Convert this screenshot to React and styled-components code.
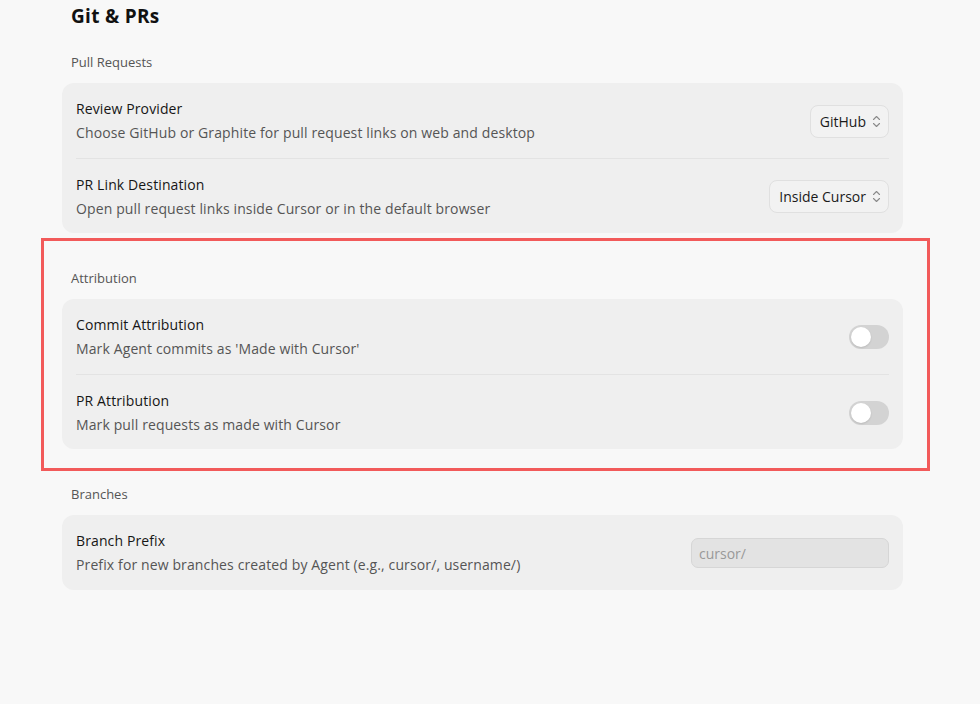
import React, { useState } from "react";
import styled, { createGlobalStyle } from "styled-components";

const GlobalStyle = createGlobalStyle`
  html, body {
    margin: 0;
    padding: 0;
    background: #f8f8f8;
  }

  body {
    font-family: "Open Sans", "Noto Sans", sans-serif;
    color: #1a1a1a;
    -webkit-font-smoothing: antialiased;
  }
`;

const SECTIONS = [
  {
    label: "Pull Requests",
    rows: [
      {
        title: "Review Provider",
        desc: "Choose GitHub or Graphite for pull request links on web and desktop",
        control: { kind: "select", value: "GitHub" },
      },
      {
        title: "PR Link Destination",
        desc: "Open pull request links inside Cursor or in the default browser",
        control: { kind: "select", value: "Inside Cursor" },
      },
    ],
  },
  {
    label: "Attribution",
    highlighted: true,
    rows: [
      {
        title: "Commit Attribution",
        desc: "Mark Agent commits as 'Made with Cursor'",
        control: { kind: "toggle", name: "commit" },
      },
      {
        title: "PR Attribution",
        desc: "Mark pull requests as made with Cursor",
        control: { kind: "toggle", name: "pr" },
      },
    ],
  },
  {
    label: "Branches",
    rows: [
      {
        title: "Branch Prefix",
        desc: "Prefix for new branches created by Agent (e.g., cursor/, username/)",
        control: { kind: "input", placeholder: "cursor/" },
      },
    ],
  },
];

const Chevrons = () => (
  <svg width="9" height="13" viewBox="0 0 9 13" fill="none">
    <path d="M1.5 4.5L4.5 1.5L7.5 4.5" stroke="#8a8a8a" strokeWidth="1.1" strokeLinecap="round" strokeLinejoin="round" />
    <path d="M1.5 8.5L4.5 11.5L7.5 8.5" stroke="#8a8a8a" strokeWidth="1.1" strokeLinecap="round" strokeLinejoin="round" />
  </svg>
);

const Control = ({ control, toggles, onToggle }) => {
  if (control.kind === "select") {
    return (
      <Select>
        <span>{control.value}</span>
        <Chevrons />
      </Select>
    );
  }
  if (control.kind === "toggle") {
    const on = !!toggles[control.name];
    return (
      <Toggle $on={on} onClick={() => onToggle(control.name)}>
        <Knob $on={on} />
      </Toggle>
    );
  }
  return <TextInput placeholder={control.placeholder} />;
};

const App = () => {
  const [toggles, setToggles] = useState({ commit: false, pr: false });

  const handleToggle = (name) => {
    setToggles((prev) => ({ ...prev, [name]: !prev[name] }));
  };

  return (
    <>
      <GlobalStyle />
      <Page>
        <Heading>Git &amp; PRs</Heading>
        {SECTIONS.map((section) => (
          <Section key={section.label} $highlighted={section.highlighted}>
            <SectionLabel>{section.label}</SectionLabel>
            <Card>
              {section.rows.map((row) => (
                <Row key={row.title}>
                  <RowText>
                    <RowTitle>{row.title}</RowTitle>
                    <RowDesc>{row.desc}</RowDesc>
                  </RowText>
                  <Control control={row.control} toggles={toggles} onToggle={handleToggle} />
                </Row>
              ))}
            </Card>
          </Section>
        ))}
      </Page>
    </>
  );
};

const Page = styled.div`
  width: 841px;
  margin-left: 62px;
  padding-top: 4px;
  display: flex;
  flex-direction: column;
  gap: 37px;
`;

const Heading = styled.h1`
  margin: 0 0 -11px 9px;
  font-size: 19px;
  font-weight: 700;
  line-height: 24px;
  letter-spacing: 0.3px;
  color: #111;
`;

const Section = styled.section`
  position: relative;
  display: flex;
  flex-direction: column;
  gap: 13px;

  ${({ $highlighted }) =>
    $highlighted &&
    `
    &::after {
      content: "";
      position: absolute;
      left: -21px;
      right: -27px;
      top: -32px;
      bottom: -22px;
      border: 3px solid #f25a5a;
      pointer-events: none;
    }
  `}
`;

const SectionLabel = styled.div`
  padding-left: 9px;
  font-size: 13px;
  line-height: 16px;
  color: #555;
`;

const Card = styled.div`
  background: #efefef;
  border-radius: 12px;
  padding: 0 14px;
`;

const Row = styled.div`
  display: flex;
  align-items: center;
  justify-content: space-between;
  height: 75px;
  box-sizing: border-box;
  padding-top: 1px;

  & + & {
    border-top: 1px solid #e3e3e3;
  }
`;

const RowText = styled.div`
  display: flex;
  flex-direction: column;
  gap: 4px;
  letter-spacing: 0.12px;
`;

const RowTitle = styled.div`
  font-size: 14px;
  line-height: 20px;
  color: #161616;
`;

const RowDesc = styled.div`
  font-size: 14px;
  line-height: 20px;
  color: #555;
`;

const Select = styled.div`
  display: flex;
  align-items: center;
  gap: 6px;
  height: 33px;
  box-sizing: border-box;
  padding: 0 7px 0 9px;
  border: 1px solid #e0e0e0;
  border-radius: 8px;
  background: #f2f2f2;
  font-size: 14px;
  color: #1a1a1a;
  cursor: pointer;
`;

const Toggle = styled.div`
  position: relative;
  width: 40px;
  height: 24px;
  border-radius: 12px;
  background: ${({ $on }) => ($on ? "#3b82f6" : "#d3d3d3")};
  cursor: pointer;
`;

const Knob = styled.div`
  position: absolute;
  top: 2px;
  left: ${({ $on }) => ($on ? "18px" : "2px")};
  width: 20px;
  height: 20px;
  border-radius: 50%;
  background: #fff;
  box-shadow: 0 1px 2px rgba(0, 0, 0, 0.12);
`;

const TextInput = styled.input`
  width: 198px;
  height: 30px;
  box-sizing: border-box;
  padding: 0 7px;
  border: 1px solid #d6d6d6;
  border-radius: 7px;
  background: #e3e3e3;
  font-family: inherit;
  font-size: 14px;
  color: #1a1a1a;
  outline: none;

  &::placeholder {
    color: #999;
  }
`;

export default App;
